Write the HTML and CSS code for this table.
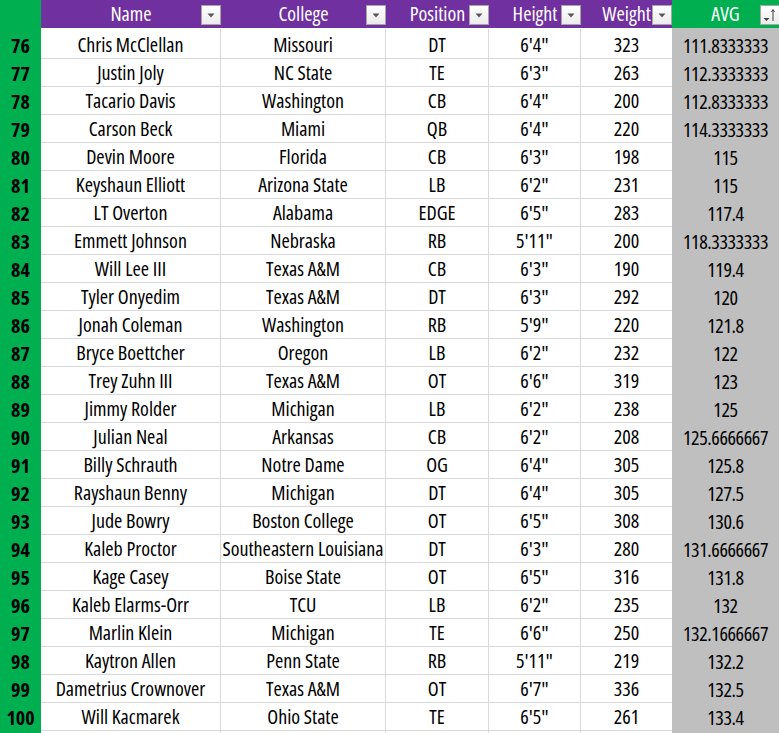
FILE: index.html
```html
<!DOCTYPE html>
<html>
<head>
<meta charset="utf-8">
<link rel="stylesheet" href="styles.css">
</head>
<body>
<div class="sheet">
  <div class="row head">
    <div class="num"></div>
    <div class="hc">Name<span class="dd"><svg width="8" height="5" viewBox="0 0 8 5"><path d="M0.5 0.5h7L4 4.5z" fill="#595959"/></svg></span></div>
    <div class="hc">College<span class="dd"><svg width="8" height="5" viewBox="0 0 8 5"><path d="M0.5 0.5h7L4 4.5z" fill="#595959"/></svg></span></div>
    <div class="hc">Position<span class="dd"><svg width="8" height="5" viewBox="0 0 8 5"><path d="M0.5 0.5h7L4 4.5z" fill="#595959"/></svg></span></div>
    <div class="hc">Height<span class="dd"><svg width="8" height="5" viewBox="0 0 8 5"><path d="M0.5 0.5h7L4 4.5z" fill="#595959"/></svg></span></div>
    <div class="hc">Weight<span class="dd"><svg width="8" height="5" viewBox="0 0 8 5"><path d="M0.5 0.5h7L4 4.5z" fill="#595959"/></svg></span></div>
    <div class="hc avg-h">AVG<span class="dd sort"><svg width="18" height="18" viewBox="0 0 18 18"><path d="M2.5 12h6L5.5 15z" fill="#404040"/><path d="M12 4v11" stroke="#404040" stroke-width="1"/><path d="M10.5 6l1.5-2.5 1.5 2.5" stroke="#404040" stroke-width="1" fill="none"/></svg></span></div>
  </div>
  <div class="row"><div class="num">76</div><div class="c">Chris McClellan</div><div class="c">Missouri</div><div class="c">DT</div><div class="c">6'4"</div><div class="c nb">323</div><div class="avg">111.8333333</div></div>
  <div class="row"><div class="num">77</div><div class="c">Justin Joly</div><div class="c">NC State</div><div class="c">TE</div><div class="c">6'3"</div><div class="c nb">263</div><div class="avg">112.3333333</div></div>
  <div class="row"><div class="num">78</div><div class="c">Tacario Davis</div><div class="c">Washington</div><div class="c">CB</div><div class="c">6'4"</div><div class="c nb">200</div><div class="avg">112.8333333</div></div>
  <div class="row"><div class="num">79</div><div class="c">Carson Beck</div><div class="c">Miami</div><div class="c">QB</div><div class="c">6'4"</div><div class="c nb">220</div><div class="avg">114.3333333</div></div>
  <div class="row"><div class="num">80</div><div class="c">Devin Moore</div><div class="c">Florida</div><div class="c">CB</div><div class="c">6'3"</div><div class="c nb">198</div><div class="avg">115</div></div>
  <div class="row"><div class="num">81</div><div class="c">Keyshaun Elliott</div><div class="c">Arizona State</div><div class="c">LB</div><div class="c">6'2"</div><div class="c nb">231</div><div class="avg">115</div></div>
  <div class="row"><div class="num">82</div><div class="c">LT Overton</div><div class="c">Alabama</div><div class="c">EDGE</div><div class="c">6'5"</div><div class="c nb">283</div><div class="avg">117.4</div></div>
  <div class="row"><div class="num">83</div><div class="c">Emmett Johnson</div><div class="c">Nebraska</div><div class="c">RB</div><div class="c">5'11"</div><div class="c nb">200</div><div class="avg">118.3333333</div></div>
  <div class="row"><div class="num">84</div><div class="c">Will Lee III</div><div class="c">Texas A&amp;M</div><div class="c">CB</div><div class="c">6'3"</div><div class="c nb">190</div><div class="avg">119.4</div></div>
  <div class="row"><div class="num">85</div><div class="c">Tyler Onyedim</div><div class="c">Texas A&amp;M</div><div class="c">DT</div><div class="c">6'3"</div><div class="c nb">292</div><div class="avg">120</div></div>
  <div class="row"><div class="num">86</div><div class="c">Jonah Coleman</div><div class="c">Washington</div><div class="c">RB</div><div class="c">5'9"</div><div class="c nb">220</div><div class="avg">121.8</div></div>
  <div class="row"><div class="num">87</div><div class="c">Bryce Boettcher</div><div class="c">Oregon</div><div class="c">LB</div><div class="c">6'2"</div><div class="c nb">232</div><div class="avg">122</div></div>
  <div class="row"><div class="num">88</div><div class="c">Trey Zuhn III</div><div class="c">Texas A&amp;M</div><div class="c">OT</div><div class="c">6'6"</div><div class="c nb">319</div><div class="avg">123</div></div>
  <div class="row"><div class="num">89</div><div class="c">Jimmy Rolder</div><div class="c">Michigan</div><div class="c">LB</div><div class="c">6'2"</div><div class="c nb">238</div><div class="avg">125</div></div>
  <div class="row"><div class="num">90</div><div class="c">Julian Neal</div><div class="c">Arkansas</div><div class="c">CB</div><div class="c">6'2"</div><div class="c nb">208</div><div class="avg">125.6666667</div></div>
  <div class="row"><div class="num">91</div><div class="c">Billy Schrauth</div><div class="c">Notre Dame</div><div class="c">OG</div><div class="c">6'4"</div><div class="c nb">305</div><div class="avg">125.8</div></div>
  <div class="row"><div class="num">92</div><div class="c">Rayshaun Benny</div><div class="c">Michigan</div><div class="c">DT</div><div class="c">6'4"</div><div class="c nb">305</div><div class="avg">127.5</div></div>
  <div class="row"><div class="num">93</div><div class="c">Jude Bowry</div><div class="c">Boston College</div><div class="c">OT</div><div class="c">6'5"</div><div class="c nb">308</div><div class="avg">130.6</div></div>
  <div class="row"><div class="num">94</div><div class="c">Kaleb Proctor</div><div class="c">Southeastern Louisiana</div><div class="c">DT</div><div class="c">6'3"</div><div class="c nb">280</div><div class="avg">131.6666667</div></div>
  <div class="row"><div class="num">95</div><div class="c">Kage Casey</div><div class="c">Boise State</div><div class="c">OT</div><div class="c">6'5"</div><div class="c nb">316</div><div class="avg">131.8</div></div>
  <div class="row"><div class="num">96</div><div class="c">Kaleb Elarms-Orr</div><div class="c">TCU</div><div class="c">LB</div><div class="c">6'2"</div><div class="c nb">235</div><div class="avg">132</div></div>
  <div class="row"><div class="num">97</div><div class="c">Marlin Klein</div><div class="c">Michigan</div><div class="c">TE</div><div class="c">6'6"</div><div class="c nb">250</div><div class="avg">132.1666667</div></div>
  <div class="row"><div class="num">98</div><div class="c">Kaytron Allen</div><div class="c">Penn State</div><div class="c">RB</div><div class="c">5'11"</div><div class="c nb">219</div><div class="avg">132.2</div></div>
  <div class="row"><div class="num">99</div><div class="c">Dametrius Crownover</div><div class="c">Texas A&amp;M</div><div class="c">OT</div><div class="c">6'7"</div><div class="c nb">336</div><div class="avg">132.5</div></div>
  <div class="row"><div class="num">100</div><div class="c">Will Kacmarek</div><div class="c">Ohio State</div><div class="c">TE</div><div class="c">6'5"</div><div class="c nb">261</div><div class="avg">133.4</div></div>
  <div class="row tail"><div class="num"></div><div class="c"></div><div class="c"></div><div class="c"></div><div class="c"></div><div class="c nb"></div><div class="avg"></div></div>
</div>
</body>
</html>
```
FILE: styles.css
```css
html, body {
  margin: 0;
  padding: 0;
  background: #ffffff;
  overflow: hidden;
}
.sheet {
  width: 779px;
  height: 733px;
  overflow: hidden;
  font-family: "Open Sans", "Liberation Sans Narrow", sans-serif;
  font-stretch: 75%;
  font-size: 20px;
  font-weight: 500;
  color: #000;
}
.row {
  display: grid;
  grid-template-columns: 41px 180px 165px 103px 92px 91px 107px;
  height: 28px;
}
.row > div {
  display: flex;
  align-items: center;
  justify-content: center;
  white-space: nowrap;
  box-sizing: border-box;
  padding-top: 2px;
}
.head {
  height: 29px;
}
.head .num {
  background: #00b050;
}
.row > .hc {
  position: relative;
  background: #7030a0;
  color: #ffffff;
  font-weight: 400;
  font-size: 20px;
  border-bottom: 1px solid #ffffff;
  padding-top: 0;
  padding-bottom: 1px;
}
.row > .hc.avg-h {
  background: #00b050;
  border-bottom: 1px solid #bfbfbf;
}
.dd {
  position: absolute;
  right: 0;
  top: 5px;
  width: 20px;
  height: 20px;
  box-sizing: border-box;
  border: 1px solid #a6a6a6;
  background: linear-gradient(#ffffff, #ebebeb);
  display: flex;
  align-items: center;
  justify-content: center;
}
.dd svg {
  display: block;
  margin-top: 1px;
}
.dd.sort {
  right: -1px;
}
.dd.sort svg {
  margin-top: 0;
}
.num {
  background: #00b050;
  font-weight: 700;
  font-size: 20px;
}
.c {
  border-right: 1px solid #d9d9d9;
  border-bottom: 1px solid #d9d9d9;
}
.c.nb {
  border-right: none;
}
.avg {
  background: #bfbfbf;
  letter-spacing: -0.4px;
}
.tail {
  height: 10px;
}
.tail .c {
  border-bottom: none;
}
```
